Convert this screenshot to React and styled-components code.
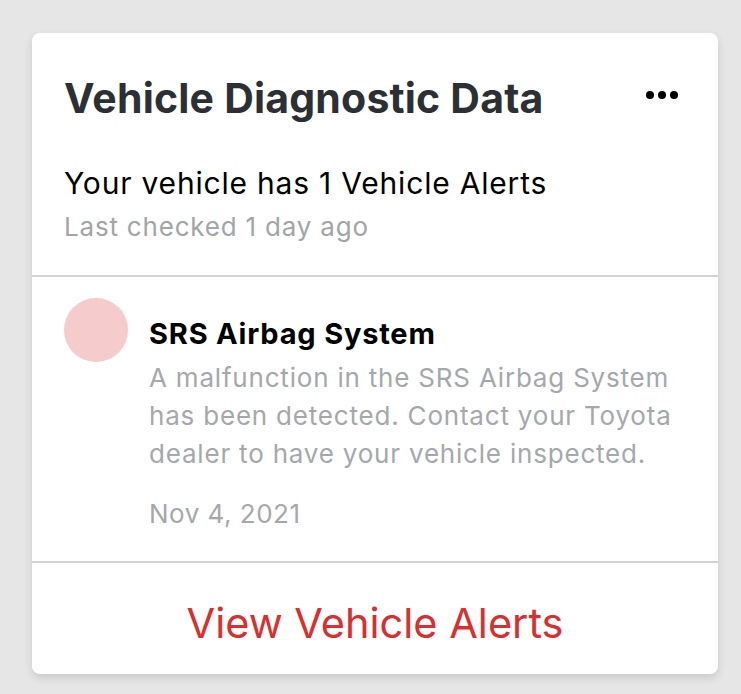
import React from 'react'
import styled, { createGlobalStyle } from 'styled-components'

const GlobalStyle = createGlobalStyle`
body {
  margin: 0;
  background: #e6e6e6;
  font-family: Inter, Lato, sans-serif;
}
`

const Page = styled.div`
padding: 33px 23px 20px 32px;
`

const Card = styled.div`
width: 686px;
background: #fff;
border-radius: 8px;
box-shadow: 0 4px 8px rgba(0,0,0,0.12);
overflow: hidden;
`

const Summary = styled.div`
padding: 41px 32px 33px;
border-bottom: 2px solid #d3d3d3;
`

const TitleRow = styled.div`
display: flex;
align-items: center;
justify-content: space-between;
`

const Title = styled.h1`
margin: 0;
font-size: 41px;
line-height: 48px;
font-weight: 700;
letter-spacing: 0.2px;
color: #2c3035;
`

const MoreButton = styled.button`
border: none;
background: none;
padding: 0 8px 0 0;
margin-bottom: 6px;
display: flex;
gap: 4px;
cursor: pointer;

span {
  width: 8px;
  height: 8px;
  border-radius: 50%;
  background: #000;
}
`

const Status = styled.div`
margin-top: 43px;
font-size: 30px;
line-height: 36px;
letter-spacing: 0.8px;
color: #000;
`

const Checked = styled.div`
margin-top: 11px;
font-size: 26px;
line-height: 30px;
letter-spacing: 0.8px;
color: #a2a5a8;
`

const AlertItem = styled.div`
display: flex;
gap: 21px;
padding: 21px 24px 32px 32px;
border-bottom: 2px solid #d3d3d3;
`

const Dot = styled.div`
flex: none;
width: 64px;
height: 64px;
border-radius: 50%;
background: #f5cccb;
`

const AlertBody = styled.div`
padding-top: 19px;
`

const AlertTitle = styled.div`
font-size: 29px;
line-height: 34px;
font-weight: 700;
letter-spacing: 0.8px;
color: #000;
`

const AlertText = styled.div`
margin-top: 8px;
font-size: 26px;
line-height: 38px;
letter-spacing: 0.8px;
color: #a5a8ab;
`

const AlertDate = styled.div`
margin-top: 26px;
font-size: 26px;
line-height: 30px;
letter-spacing: 0.5px;
color: #a5a8ab;
`

const Footer = styled.button`
display: block;
width: 100%;
border: none;
background: none;
padding: 36px 0 27px;
font-family: inherit;
font-size: 41.5px;
line-height: 48px;
color: #d92f2f;
cursor: pointer;
`

export default function App() {
  return (
    <Page>
      <GlobalStyle />
      <Card>
        <Summary>
          <TitleRow>
            <Title>Vehicle Diagnostic Data</Title>
            <MoreButton aria-label="More">
              <span />
              <span />
              <span />
            </MoreButton>
          </TitleRow>
          <Status>Your vehicle has 1 Vehicle Alerts</Status>
          <Checked>Last checked 1 day ago</Checked>
        </Summary>
        <AlertItem>
          <Dot />
          <AlertBody>
            <AlertTitle>SRS Airbag System</AlertTitle>
            <AlertText>
              A malfunction in the SRS Airbag System has been detected. Contact your Toyota dealer to have your vehicle inspected.
            </AlertText>
            <AlertDate>Nov 4, 2021</AlertDate>
          </AlertBody>
        </AlertItem>
        <Footer>View Vehicle Alerts</Footer>
      </Card>
    </Page>
  )
}
